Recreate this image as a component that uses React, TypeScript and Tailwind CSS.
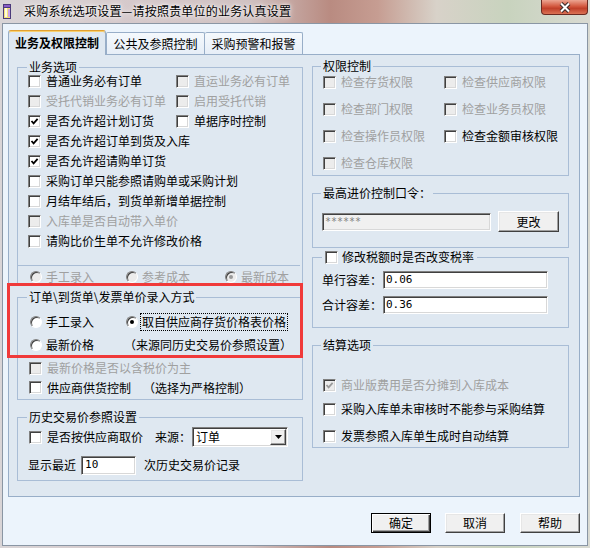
import React from "react";

const sunken =
  "border border-t-[#808080] border-l-[#808080] border-r-white border-b-white shadow-[inset_1px_1px_0_#404040,inset_-1px_-1px_0_#d8d8d8]";
const raised =
  "bg-[#f0f0f0] border border-t-white border-l-white border-r-[#404040] border-b-[#404040] shadow-[inset_-1px_-1px_0_#a0a0a0,inset_1px_1px_0_#e6e6e6]";
const groupBox = "border border-[#a9bdd6] flex flex-col";

function Box({ checked = false, disabled = false }: { checked?: boolean; disabled?: boolean }) {
  return (
    <span
      className={`flex-none w-[13px] h-[13px] flex items-center justify-center ${sunken} ${
        disabled ? "bg-[#ececec]" : "bg-white"
      }`}
    >
      {checked && (
        <svg width="9" height="9" viewBox="0 0 9 9">
          <path
            d="M1.5 4 L3.6 6.3 L7.6 1.8"
            fill="none"
            stroke={disabled ? "#9a9a9a" : "#000"}
            strokeWidth="1.8"
          />
        </svg>
      )}
    </span>
  );
}

function Radio({ checked = false, disabled = false }: { checked?: boolean; disabled?: boolean }) {
  return (
    <span
      className={`flex-none w-[12px] h-[12px] rounded-full flex items-center justify-center border border-t-[#808080] border-l-[#808080] border-r-white border-b-white shadow-[inset_1px_1px_0_#404040] ${
        disabled ? "bg-[#ececec]" : "bg-white"
      }`}
    >
      {checked && (
        <span className={`w-[4px] h-[4px] rounded-full ${disabled ? "bg-[#9a9a9a]" : "bg-black"}`} />
      )}
    </span>
  );
}

function Check({
  label,
  checked = false,
  disabled = false,
  className = "",
}: {
  label: string;
  checked?: boolean;
  disabled?: boolean;
  className?: string;
}) {
  return (
    <div className={`flex items-center gap-[5px] whitespace-nowrap ${className}`}>
      <Box checked={checked} disabled={disabled} />
      <span className={disabled ? "text-[#a0a0a0]" : "text-black"}>{label}</span>
    </div>
  );
}

function RadioItem({
  label,
  checked = false,
  disabled = false,
  className = "",
}: {
  label: string;
  checked?: boolean;
  disabled?: boolean;
  className?: string;
}) {
  return (
    <div className={`flex items-center gap-[4px] whitespace-nowrap ${className}`}>
      <Radio checked={checked} disabled={disabled} />
      <span className={disabled ? "text-[#a0a0a0]" : "text-black"}>{label}</span>
    </div>
  );
}

function Legend({ children, className = "" }: { children: React.ReactNode; className?: string }) {
  return (
    <div
      className={`w-fit -mt-[7px] h-[12px] leading-[12px] flex items-center bg-[#dfe8f1] whitespace-nowrap ${className}`}
    >
      {children}
    </div>
  );
}

export default function App() {
  return (
    <div className="w-[590px] h-[548px] flex flex-col overflow-hidden [font-family:'Noto_Sans_CJK_SC',sans-serif] text-[12px] leading-[14px] text-black bg-[linear-gradient(90deg,#d9d5d7_0%,#d6cacc_20%,#d0c2c2_42%,#b98b81_56%,#c69d92_64%,#d8d2c9_74%,#c8d3be_86%,#d9dad2_100%)]">
      {/* title bar */}
      <div className="h-[23px] flex items-start flex-none">
        <div className="ml-[2px] mt-[3px]">
          <svg width="11" height="17" viewBox="0 0 11 17">
            <rect x="1.5" y="1.5" width="7" height="14" fill="#f4e27a" stroke="#4b3a7a" />
            <rect x="3" y="4" width="2" height="10" fill="#fffbe0" />
            <rect x="1.5" y="1.5" width="7" height="3" fill="#8a5cc8" stroke="#4b3a7a" />
            <rect x="6" y="6" width="2" height="8" fill="#c9a0e8" />
          </svg>
        </div>
        <div className="ml-[11px] mt-[4px] whitespace-nowrap tracking-[0.2px] [text-shadow:0_0_6px_#fff,0_0_3px_#fff]">
          采购系统选项设置—请按照贵单位的业务认真设置
        </div>
        <div className="flex-1" />
        <div className="mr-[2px] w-[47px] h-[15px] rounded-b-[4px] border border-t-0 border-[#6b2a22] bg-[linear-gradient(#eca592,#d3583f_45%,#c0402a_60%,#db7255)] flex items-center justify-center">
          <svg width="14" height="11" viewBox="0 0 14 11">
            <path d="M3 1.5 L11 9.5 M11 1.5 L3 9.5" stroke="#3b2b2b" strokeWidth="4" />
            <path d="M3 1.5 L11 9.5 M11 1.5 L3 9.5" stroke="#fff" strokeWidth="2" />
          </svg>
        </div>
      </div>

      {/* client */}
      <div className="mx-[2px] mb-[2px] flex-1 border border-[#8a96a4] bg-[#ecf4fc] flex flex-col">
        {/* tabs */}
        <div className="mt-[6px] ml-[5px] h-[25px] flex items-end relative z-10 -mb-px">
          <div className="w-[98px] h-[25px] flex items-center justify-center font-bold bg-[#dfe8f1] border border-b-0 border-[#98aec8] border-t-[#e2a030] rounded-t-[3px] shadow-[inset_0_1px_0_#f8d070]">
            业务及权限控制
          </div>
          <div className="w-[99px] h-[22px] mb-px flex items-center justify-center bg-[linear-gradient(#f5f9fd,#e6eef7)] border border-b-0 border-[#98aec8] rounded-t-[2px]">
            公共及参照控制
          </div>
          <div className="w-[98px] h-[22px] mb-px flex items-center justify-center bg-[linear-gradient(#f5f9fd,#e6eef7)] border border-b-0 border-l-0 border-[#98aec8] rounded-t-[2px]">
            采购预警和报警
          </div>
        </div>

        {/* panel */}
        <div className="ml-[5px] w-[572px] h-[443px] border border-[#98aec8] bg-[#dfe8f1] flex items-start flex-none">
          {/* left column */}
          <div className="ml-[8px] w-[286px] flex flex-col">
            <div className={`mt-[12px] h-[333px] ${groupBox}`}>
              <Legend className="ml-[9px] px-[2px]">业务选项</Legend>
              <div className="-mt-[2px] flex flex-col">
                <div className="h-[20px] pl-[10px] flex items-center">
                  <Check label="普通业务必有订单" className="w-[148px]" />
                  <Check label="直运业务必有订单" disabled />
                </div>
                <div className="h-[20px] pl-[10px] flex items-center">
                  <Check label="受托代销业务必有订单" disabled className="w-[148px]" />
                  <Check label="启用受托代销" disabled />
                </div>
                <div className="h-[20px] pl-[10px] flex items-center">
                  <Check label="是否允许超计划订货" checked className="w-[148px]" />
                  <Check label="单据序时控制" />
                </div>
                <div className="h-[20px] pl-[10px] flex items-center">
                  <Check label="是否允许超订单到货及入库" checked />
                </div>
                <div className="h-[20px] pl-[10px] flex items-center">
                  <Check label="是否允许超请购单订货" checked />
                </div>
                <div className="h-[20px] pl-[10px] flex items-center">
                  <Check label="采购订单只能参照请购单或采购计划" />
                </div>
                <div className="h-[20px] pl-[10px] flex items-center">
                  <Check label="月结年结后，到货单新增单据控制" />
                </div>
                <div className="h-[20px] pl-[10px] flex items-center">
                  <Check label="入库单是否自动带入单价" disabled />
                </div>
                <div className="h-[20px] pl-[10px] flex items-center">
                  <Check label="请购比价生单不允许修改价格" />
                </div>
              </div>

              <div className="mt-[14px] mr-[2px] border-t border-[#a9bdd6]" />
              <div className="mt-[1px] h-[20px] pl-[12px] flex items-center">
                <RadioItem label="手工录入" disabled className="w-[96px]" />
                <RadioItem label="参考成本" disabled className="w-[99px]" />
                <RadioItem label="最新成本" disabled checked />
              </div>

              {/* red highlighted box */}
              <div className="relative -mt-[4px] -ml-[11px] w-[296px] h-[75px] flex-none border-[3px] border-[#f03a3a] bg-[#dfe8f1] flex flex-col">
                <div className="ml-[7px] mt-[11px] flex-1 border-t border-l border-[#a9bdd6] flex flex-col">
                  <Legend className="ml-[9px] px-[2px]">{"订单\\到货单\\发票单价录入方式"}</Legend>
                  <div className="mt-[9px] h-[20px] pl-[12px] flex items-center">
                    <RadioItem label="手工录入" className="w-[96px]" />
                    <div className="flex items-center gap-[2px] whitespace-nowrap">
                      <Radio checked />
                      <span className="border border-dotted border-black px-[1px] leading-[16px]">
                        取自供应商存货价格表价格
                      </span>
                    </div>
                  </div>
                  <div className="mt-[3px] h-[20px] pl-[12px] flex items-center">
                    <RadioItem label="最新价格" className="w-[94px]" />
                    <span className="whitespace-nowrap">（来源同历史交易价参照设置）</span>
                  </div>
                </div>
              </div>

              <div className="h-[20px] pl-[11px] flex items-center">
                <Check label="最新价格是否以含税价为主" disabled />
              </div>
              <div className="h-[19px] pl-[11px] flex items-center">
                <Check label="供应商供货控制" />
                <span className="ml-[12px] whitespace-nowrap">（选择为严格控制）</span>
              </div>
            </div>

            <div className={`mt-[17px] h-[64px] ${groupBox}`}>
              <Legend className="ml-[9px] px-[2px]">历史交易价参照设置</Legend>
              <div className="mt-[4px] h-[20px] pl-[11px] flex items-center">
                <Check label="是否按供应商取价" />
                <span className="ml-[12px] whitespace-nowrap">来源：</span>
                <div className={`ml-[1px] w-[96px] h-[20px] bg-white flex items-center ${sunken}`}>
                  <span className="pl-[3px] flex-1">订单</span>
                  <span className={`mr-[1px] w-[16px] h-[16px] flex items-center justify-center ${raised}`}>
                    <svg width="7" height="4" viewBox="0 0 7 4">
                      <path d="M0 0 H7 L3.5 4 Z" fill="#000" />
                    </svg>
                  </span>
                </div>
              </div>
              <div className="mt-[8px] h-[20px] pl-[10px] flex items-center">
                <span className="whitespace-nowrap">显示最近</span>
                <div className={`ml-[5px] w-[55px] h-[19px] bg-white flex items-center ${sunken}`}>
                  <span className="pl-[3px] [font-family:'DejaVu_Sans_Mono',monospace] text-[11px]">10</span>
                </div>
                <span className="ml-[8px] whitespace-nowrap">次历史交易价记录</span>
              </div>
            </div>
          </div>

          {/* right column */}
          <div className="ml-[9px] w-[257px] flex flex-col">
            <div className={`mt-[11px] h-[110px] ${groupBox}`}>
              <Legend className="ml-[8px] px-[2px]">权限控制</Legend>
              <div className="flex flex-col gap-[7px]">
                <div className="h-[20px] pl-[10px] flex items-center">
                  <Check label="检查存货权限" disabled className="w-[121px]" />
                  <Check label="检查供应商权限" disabled />
                </div>
                <div className="h-[20px] pl-[10px] flex items-center">
                  <Check label="检查部门权限" disabled className="w-[121px]" />
                  <Check label="检查业务员权限" disabled />
                </div>
                <div className="h-[20px] pl-[10px] flex items-center">
                  <Check label="检查操作员权限" disabled className="w-[121px]" />
                  <Check label="检查金额审核权限" />
                </div>
                <div className="h-[20px] pl-[10px] flex items-center">
                  <Check label="检查仓库权限" disabled />
                </div>
              </div>
            </div>

            <div className={`mt-[17px] h-[55px] ${groupBox}`}>
              <Legend className="ml-[8px] px-[2px]">最高进价控制口令：</Legend>
              <div className="mt-[12px] pl-[9px] flex items-center">
                <div className={`w-[169px] h-[18px] bg-[#f0f0f0] flex items-center ${sunken}`}>
                  <span className="pl-[2px] text-[#808080] [font-family:'DejaVu_Sans_Mono',monospace] text-[10px] leading-[10px]">
                    ******
                  </span>
                </div>
                <button className={`ml-[7px] w-[61px] h-[21px] flex items-center justify-center ${raised}`}>
                  更改
                </button>
              </div>
            </div>

            <div className={`mt-[9px] h-[71px] ${groupBox}`}>
              <Legend className="ml-[9px] px-[3px] gap-[4px]">
                <Box />
                <span>修改税额时是否改变税率</span>
              </Legend>
              <div className="mt-[8px] h-[18px] pl-[9px] flex items-center">
                <span className="w-[61px] whitespace-nowrap">单行容差：</span>
                <div className={`w-[165px] h-[18px] bg-white flex items-center ${sunken}`}>
                  <span className="pl-[2px] [font-family:'DejaVu_Sans_Mono',monospace] text-[11px]">0.06</span>
                </div>
              </div>
              <div className="mt-[7px] h-[18px] pl-[9px] flex items-center">
                <span className="w-[61px] whitespace-nowrap">合计容差：</span>
                <div className={`w-[165px] h-[18px] bg-white flex items-center ${sunken}`}>
                  <span className="pl-[2px] [font-family:'DejaVu_Sans_Mono',monospace] text-[11px]">0.36</span>
                </div>
              </div>
            </div>

            <div className={`mt-[17px] h-[103px] ${groupBox}`}>
              <Legend className="ml-[8px] px-[2px]">结算选项</Legend>
              <div className="mt-[24px] h-[20px] pl-[10px] flex items-center">
                <Check label="商业版费用是否分摊到入库成本" checked disabled />
              </div>
              <div className="mt-[4px] h-[20px] pl-[10px] flex items-center">
                <Check label="采购入库单未审核时不能参与采购结算" />
              </div>
              <div className="mt-[7px] h-[20px] pl-[10px] flex items-center">
                <Check label="发票参照入库单生成时自动结算" />
              </div>
            </div>
          </div>
        </div>

        {/* buttons */}
        <div className="mt-[16px] pr-[7px] flex justify-end">
          <button className="w-[60px] h-[20px] flex items-center justify-center bg-[#f0f0f0] border border-black shadow-[inset_1px_1px_0_#fff,inset_-1px_-1px_0_#404040,inset_-2px_-2px_0_#a0a0a0]">
            确定
          </button>
          <button className={`ml-[14px] w-[60px] h-[20px] flex items-center justify-center ${raised}`}>取消</button>
          <button className={`ml-[15px] w-[60px] h-[20px] flex items-center justify-center ${raised}`}>帮助</button>
        </div>
      </div>
    </div>
  );
}
